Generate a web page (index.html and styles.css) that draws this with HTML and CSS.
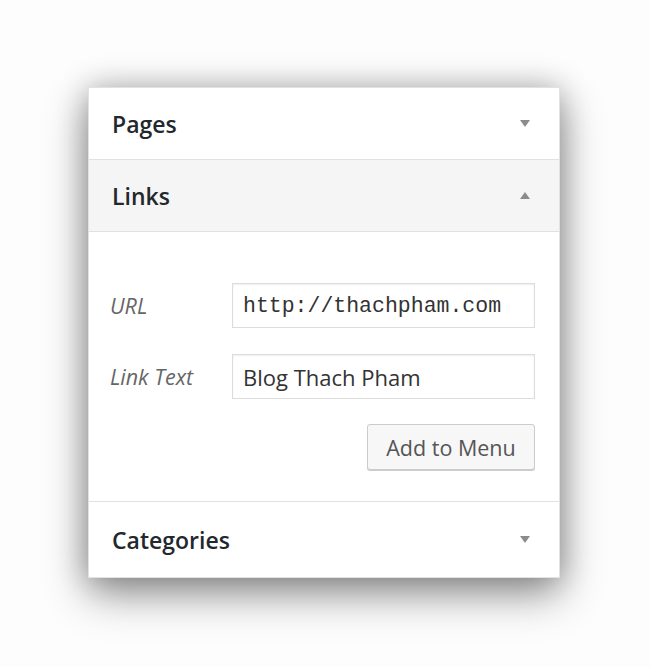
FILE: index.html
```html
<!DOCTYPE html>
<html>
<head>
<meta charset="utf-8">
<link rel="stylesheet" href="styles.css">
</head>
<body>
<div class="panel">
  <div class="section-head">
    <span class="title">Pages</span>
    <span class="arrow down"></span>
  </div>
  <div class="section-head open">
    <span class="title">Links</span>
    <span class="arrow up"></span>
  </div>
  <div class="section-body">
    <div class="row">
      <label class="label">URL</label>
      <div class="input mono">http://thachpham.com</div>
    </div>
    <div class="row">
      <label class="label">Link Text</label>
      <div class="input">Blog Thach Pham</div>
    </div>
    <div class="actions">
      <button class="button">Add to Menu</button>
    </div>
  </div>
  <div class="section-head last">
    <span class="title">Categories</span>
    <span class="arrow down"></span>
  </div>
</div>
</body>
</html>
```

FILE: styles.css
```css
html, body {
  margin: 0;
  padding: 0;
  background: #fdfdfd;
}
body {
  padding: 87px 0 90px 88px;
  font-family: "Open Sans", "Liberation Sans", sans-serif;
}
.panel {
  width: 472px;
  background: #fff;
  border: 1px solid #e2e2e2;
  box-sizing: border-box;
  box-shadow: 0 16px 40px rgba(0, 0, 0, 0.42), 0 0 28px rgba(0, 0, 0, 0.22);
}
.section-head {
  height: 72px;
  display: flex;
  align-items: center;
  justify-content: space-between;
  padding: 0 29px 0 23px;
  border-bottom: 1px solid #e1e1e1;
  box-sizing: border-box;
}
.section-head.open {
  background: #f5f5f5;
}
.section-head.last {
  height: 75px;
  border-bottom: none;
}
.title {
  font-size: 23px;
  font-weight: 600;
  color: #23282d;
}
.arrow {
  width: 0;
  height: 0;
  border-left: 5px solid transparent;
  border-right: 5px solid transparent;
}
.arrow.down {
  border-top: 7px solid #8c8c8c;
}
.arrow.up {
  border-bottom: 7px solid #8c8c8c;
}
.section-body {
  padding: 51px 24px 31px 21px;
  border-bottom: 1px solid #e1e1e1;
  display: flex;
  flex-direction: column;
  gap: 26px;
}
.row {
  display: flex;
  align-items: center;
}
.label {
  width: 122px;
  font-size: 21.5px;
  font-style: italic;
  color: #666;
}
.input {
  flex: 1;
  height: 45px;
  box-sizing: border-box;
  border: 1px solid #dcdcdc;
  box-shadow: inset 0 1px 2px rgba(0, 0, 0, 0.07);
  display: flex;
  align-items: center;
  padding: 0 10px;
  font-size: 22px;
  color: #333;
}
.input.mono {
  font-family: "Liberation Mono", "DejaVu Sans Mono", monospace;
  font-size: 21.5px;
}
.actions {
  display: flex;
  justify-content: flex-end;
  margin-top: -1px;
}
.button {
  width: 168px;
  height: 46px;
  border: 1px solid #cccccc;
  border-radius: 3px;
  background: #f7f7f7;
  box-shadow: 0 1px 0 #cccccc;
  font-family: "Open Sans", "Liberation Sans", sans-serif;
  font-size: 21.5px;
  color: #555;
  padding: 0;
}
```
